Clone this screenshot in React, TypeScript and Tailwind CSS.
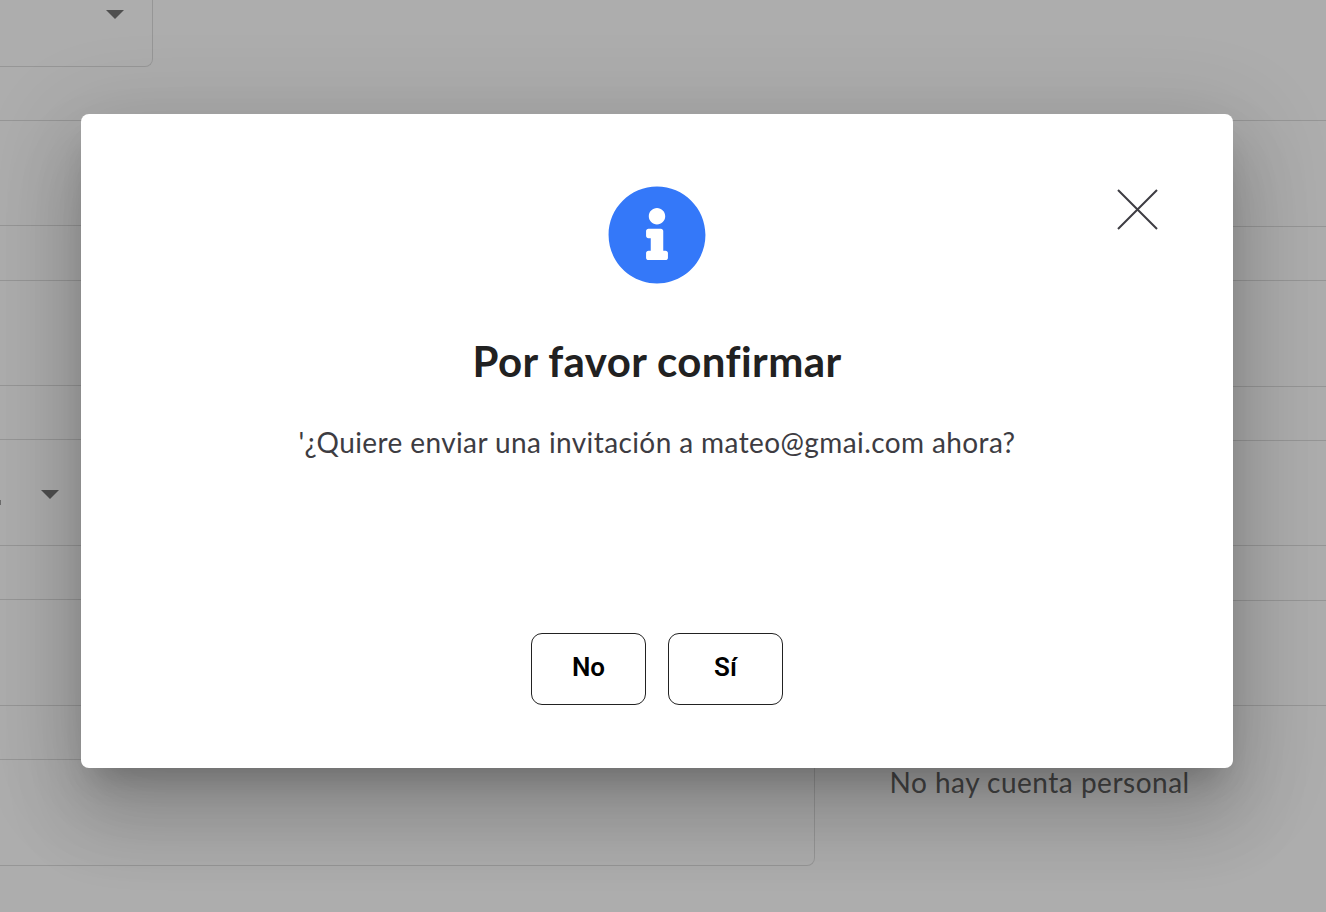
import React from 'react';
import { FaInfoCircle } from 'react-icons/fa';

const Caret = () => (
    <svg width="18" height="9" viewBox="0 0 18 9" className="block shrink-0 fill-[#757575]">
        <path d="M0 0h18L9 9z" />
    </svg>
);

// Page underneath the dialog
const FormPage = () => (
    <div className="flex h-full flex-col bg-white">
        <div className="flex h-[67px] w-[153px] shrink-0 justify-end rounded-br-lg border-r border-b border-[#dedede] pt-[10px] pr-7">
            <Caret />
        </div>

        <div className="flex pt-[53px]">
            <div className="flex w-[815px] shrink-0 flex-col rounded-br-lg border-t border-r border-b border-[#dedede]">
                <div className="h-[105px] border-b border-[#dedede]" />
                <div className="h-[55px] border-b border-[#dedede]" />
                <div className="h-[105px] border-b border-[#dedede]" />
                <div className="h-[54px] border-b border-[#dedede]" />
                <div className="flex h-[106px] items-start border-b border-[#dedede] pt-[50px]">
                    <div className="mt-[10px] h-[5px] w-px bg-[#a0a0a0]" />
                    <div className="ml-10">
                        <Caret />
                    </div>
                </div>
                <div className="h-[54px] border-b border-[#dedede]" />
                <div className="h-[106px] border-b border-[#dedede]" />
                <div className="h-[54px] border-b border-[#dedede]" />
                <div className="h-[105px]" />
            </div>

            <div className="flex flex-1 flex-col border-t border-[#dedede]">
                <div className="h-[106px] border-b border-[#dedede]" />
                <div className="h-[54px] border-b border-[#dedede]" />
                <div className="h-[106px] border-b border-[#dedede]" />
                <div className="h-[54px] border-b border-[#dedede]" />
                <div className="h-[105px] border-b border-[#dedede]" />
                <div className="h-[55px] border-b border-[#dedede]" />
                <div className="h-[105px] border-b border-[#dedede]" />
                <p className="pt-[58px] pl-[74.5px] text-[28px] leading-9 tracking-[0.5px] whitespace-nowrap text-[#686868]">
                    No hay cuenta personal
                </p>
            </div>
        </div>
    </div>
);

const ConfirmDialog = () => (
    <div
        role="dialog"
        className="flex h-[654px] w-[1152px] flex-col items-center rounded-lg bg-white shadow-[0_22px_30px_-14px_rgba(0,0,0,0.2),0_48px_76px_6px_rgba(0,0,0,0.14),0_18px_92px_16px_rgba(0,0,0,0.12)]"
    >
        <div className="grid w-full grid-cols-3 items-start px-[75px] pt-[71px]">
            <FaInfoCircle className="col-start-2 size-[100px] justify-self-center text-[#3478f9]" />
            <button aria-label="Cerrar" className="mt-1 justify-self-end">
                <svg width="41" height="41" viewBox="0 0 41 41" className="block" fill="none" stroke="#3d3c42" strokeWidth="2">
                    <path d="M1 1l39 39M40 1L1 40" />
                </svg>
            </button>
        </div>

        <h2 className="mt-[51px] text-[42px] leading-[50px] font-bold tracking-[0.4px] whitespace-nowrap text-[#212121]">
            Por favor confirmar
        </h2>
        <p className="mt-[38px] text-[28px] leading-[36px] tracking-[0.4px] whitespace-nowrap text-[#3d3c42]">
            '¿Quiere enviar una invitación a mateo@gmai.com ahora?
        </p>

        <div className="mt-[173px] flex gap-[22px] font-['Roboto',sans-serif] text-[26px] font-semibold text-black">
            <button className="h-[72px] w-[115px] rounded-[11px] border border-[#222] pb-[3px]">No</button>
            <button className="h-[72px] w-[115px] rounded-[11px] border border-[#222] pb-[3px]">Sí</button>
        </div>
    </div>
);

export default function App() {
    return (
        <div className="relative h-[912px] w-[1326px] overflow-hidden font-['Lato',sans-serif]">
            <FormPage />
            <div className="absolute inset-0 bg-black/32 pt-[114px] pl-[81px]">
                <ConfirmDialog />
            </div>
        </div>
    );
}
